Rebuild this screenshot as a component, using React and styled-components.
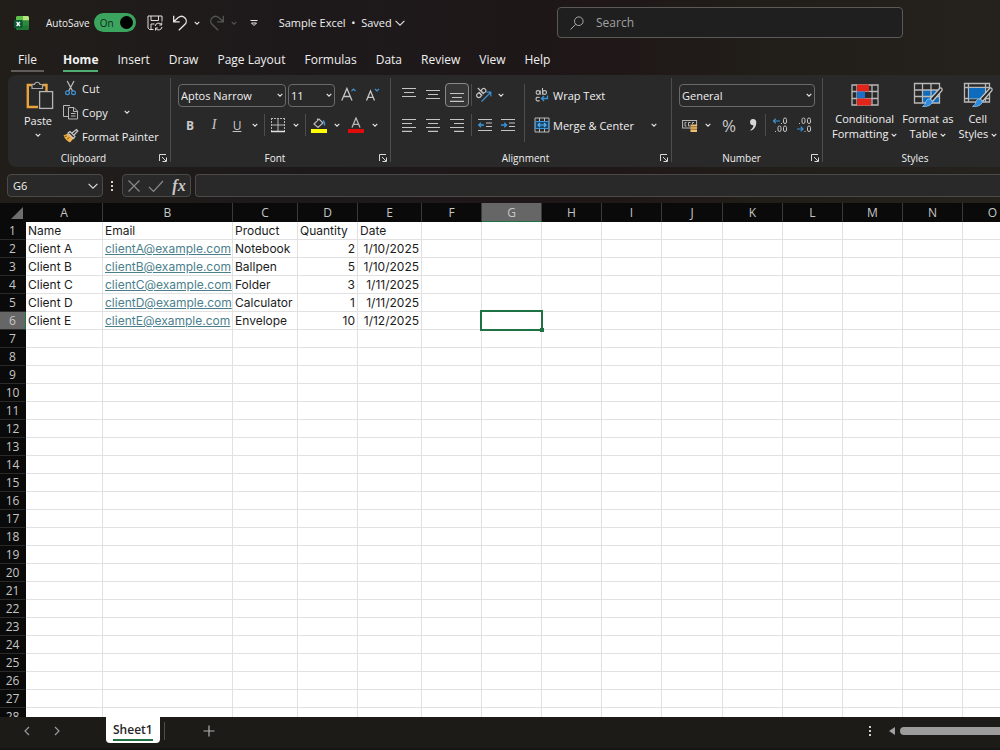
import React from "react";
import styled, { createGlobalStyle, css } from "styled-components";

const columns = [
  { name: "A", width: 77 },
  { name: "B", width: 130 },
  { name: "C", width: 65 },
  { name: "D", width: 60 },
  { name: "E", width: 64 },
  { name: "F", width: 60 },
  { name: "G", width: 60 },
  { name: "H", width: 60 },
  { name: "I", width: 60 },
  { name: "J", width: 61 },
  { name: "K", width: 60 },
  { name: "L", width: 60 },
  { name: "M", width: 60 },
  { name: "N", width: 60 },
  { name: "O", width: 60 },
];

const sheet = [
  ["Name", "Email", "Product", "Quantity", "Date"],
  ["Client A", "clientA@example.com", "Notebook", 2, "1/10/2025"],
  ["Client B", "clientB@example.com", "Ballpen", 5, "1/10/2025"],
  ["Client C", "clientC@example.com", "Folder", 3, "1/11/2025"],
  ["Client D", "clientD@example.com", "Calculator", 1, "1/11/2025"],
  ["Client E", "clientE@example.com", "Envelope", 10, "1/12/2025"],
];

const tabs = [
  "Insert",
  "Draw",
  "Page Layout",
  "Formulas",
  "Data",
  "Review",
  "View",
  "Help",
];

const ROW_COUNT = 28;
const tableWidth = columns.reduce((sum, c) => sum + c.width, 26);

// icons
const Chevron = ({ size = 6, color = "#e6e6e6" }) => (
  <svg width={size} height={size} viewBox="0 0 6 6" fill="none">
    <path d="M0.7 1.8 L3 4.2 L5.3 1.8" stroke={color} strokeWidth="1.1" />
  </svg>
);

const WideChevron = ({ color = "#e0e0e0" }) => (
  <svg width="10" height="10" viewBox="0 0 10 10" fill="none">
    <path d="M0.6 2.8 L5 7.2 L9.4 2.8" stroke={color} strokeWidth="1.1" />
  </svg>
);

const Logo = () => (
  <svg width="16" height="16" viewBox="0 0 16 16">
    <rect x="2" y="1" width="13" height="14" rx="1.5" fill="#1d7a34" />
    <path d="M3.5 1H9v4.6H2V2.500A1.500 1.500 0 0 1 3.500 1Z" fill="#5fbf4c" />
    <path d="M9 1h4.500A1.500 1.500 0 0 1 15 2.500V5.600H9Z" fill="#b7e67c" />
    <rect x="9" y="5.600" width="6" height="5" fill="#2c8a3a" />
    <rect x="0" y="5" width="8.500" height="8" rx="1.200" fill="#0c5a35" />
    <path d="M2.600 7 5.900 11M5.900 7 2.600 11" stroke="#fff" strokeWidth="1.300" />
  </svg>
);

const SaveIcon = () => (
  <svg width="16" height="16" viewBox="0 0 16 16" fill="none" stroke="#e0e0e0">
    <path d="M6.500 14.500H2.500L1 13V1H15V6.500M4 1V5.500H11.500V1M4 14.500V9H7.500" />
    <path d="M8.200 11A3.400 3.400 0 0 1 14.500 9.800M14.700 7.600V10H12.300M15 12A3.400 3.400 0 0 1 8.700 13.300M8.500 15.500V13H10.900" />
  </svg>
);

const UndoIcon = ({ color = "#e6e6e6" }) => (
  <svg width="16" height="16" viewBox="0 0 16 16" fill="none" stroke={color} strokeWidth="1.300">
    <path d="M1.700 0.800V6.800H7.700M1.900 6.600 6.300 2.600A5 5 0 0 1 12.800 2.700 4.700 4.700 0 0 1 13 9.300L6.800 15.300" />
  </svg>
);

const RedoIcon = () => (
  <svg width="16" height="16" viewBox="0 0 16 16" fill="none" stroke="#555" strokeWidth="1.300">
    <path d="M14.300 0.800V6.800H8.300M14.100 6.600 9.700 2.600A5 5 0 0 0 3.200 2.700 4.700 4.700 0 0 0 3 9.300L9.200 15.300" />
  </svg>
);

const CustomizeIcon = () => (
  <svg width="8" height="8" viewBox="0 0 8 8" fill="none" stroke="#e6e6e6">
    <path d="M0.500 1.500H7.500M1.500 4 4 6.500 6.500 4Z" />
  </svg>
);

const SearchIcon = () => (
  <svg width="14" height="14" viewBox="0 0 14 14" fill="none" stroke="#a8a8a8">
    <circle cx="8.800" cy="5.200" r="4.300" />
    <path d="M5.700 8.300 0.500 13.500" />
  </svg>
);

const PasteIcon = () => (
  <svg width="32" height="30" viewBox="-4 0 32 30" fill="none">
    <path d="M8 5H1.800V27H12M17 5H20.500V11" stroke="#e8a33d" strokeWidth="2.400" />
    <path d="M6 8.500V4.500H8.500A2.800 2.800 0 0 1 14 4.500H16.500V8.500Z" fill="#292929" stroke="#a8a8a8" strokeWidth="1.200" />
    <rect x="13.600" y="11.600" width="13" height="16.800" fill="#292929" stroke="#b5b5b5" strokeWidth="1.300" />
  </svg>
);

const CutIcon = () => (
  <svg width="16" height="16" viewBox="0 0 16 16" fill="none">
    <path d="M4.200 1 9.500 11M11 1 5.700 11" stroke="#c0c0c0" strokeWidth="1.200" />
    <circle cx="4.500" cy="12.700" r="1.900" stroke="#3b93d6" strokeWidth="1.200" />
    <circle cx="10.500" cy="12.700" r="1.900" stroke="#3b93d6" strokeWidth="1.200" />
  </svg>
);

const CopyIcon = () => (
  <svg width="16" height="16" viewBox="0 0 16 16" fill="none" stroke="#b8b8b8">
    <path d="M5 12.500H0.500V1.500H7" />
    <path d="M5.500 3.500H11L14.500 7V15H5.500ZM10.500 3.500V7.500H14.500M8 9.500H12.500M8 12H12.500" />
  </svg>
);

const PainterIcon = () => (
  <svg width="16" height="16" viewBox="0 0 16 16" fill="none">
    <path d="M0.500 7.500 5 5.500 10.500 10.500 7 14.500Q2.500 12.500 0.500 7.500Z" fill="#f0b34c" />
    <path d="M4 11 6.500 9.500M1.500 8.500 4 8" stroke="#7d5617" />
    <path d="M5 5 7 3.500 12 8.500 10.500 10.500ZM9 5 13.500 1.500 14.800 3 11 7" stroke="#c8c8c8" strokeWidth="1.200" fill="#292929" />
  </svg>
);

const LauncherIcon = () => (
  <svg width="8" height="8" viewBox="0 0 8 8" fill="none" stroke="#d8d8d8">
    <path d="M0.500 7V0.500H7M3 3 7 7M7.500 3.500V7.500H3.500" />
  </svg>
);

const GrowIcon = () => (
  <svg width="16" height="16" viewBox="0 0 16 16" fill="none">
    <path d="M0.800 13.500 5.900 1.500 11 13.500M2.600 9.500H9.200" stroke="#c4c4c4" strokeWidth="1.300" />
    <path d="M10.500 4 12.500 2 14.500 4" stroke="#3b93d6" strokeWidth="1.200" />
  </svg>
);

const ShrinkIcon = () => (
  <svg width="16" height="16" viewBox="0 0 16 16" fill="none">
    <path d="M1.500 13.500 5.500 4 9.500 13.500M3 10.300H8" stroke="#c4c4c4" strokeWidth="1.300" />
    <path d="M10 2 12 4 14 2" stroke="#3b93d6" strokeWidth="1.200" />
  </svg>
);

const BordersIcon = () => (
  <svg width="16" height="16" viewBox="0 0 16 16" fill="none" stroke="#b8b8b8">
    <path d="M1.500 1V14M14.500 1V14M1 1.500H15" strokeDasharray="2 1" />
    <path d="M8 2V14M2 8H14" />
    <path d="M1 14.500H15" stroke="#e0e0e0" strokeWidth="1.500" />
  </svg>
);

const FillIcon = () => (
  <svg width="16" height="16" viewBox="0 0 16 16" fill="none">
    <path d="M6.500 1.500V4M3 7 8 2 12 6 7 10.500Z" stroke="#b8b8b8" strokeWidth="1.200" />
    <path d="M12 3.500Q14 5 13.500 8.500" stroke="#3b93d6" strokeWidth="1.400" />
    <rect x="0" y="12" width="16" height="4" fill="#ffff00" />
  </svg>
);

const FontColorIcon = () => (
  <svg width="16" height="16" viewBox="0 0 16 16" fill="none">
    <path d="M4 10.500 8 1 12 10.500M5.400 7.300H10.600" stroke="#b8b8b8" strokeWidth="1.300" />
    <rect x="0" y="12" width="16" height="4" fill="#e00b0b" />
  </svg>
);

const LinesIcon = ({ lines }) => (
  <svg width="14" height="14" viewBox="0 0 14 14" stroke="#c4c4c4" strokeWidth="1.200">
    {lines.map(([x1, x2, y]) => (
      <path key={y} d={`M${x1} ${y}H${x2}`} />
    ))}
  </svg>
);

const OrientationIcon = () => (
  <svg width="16" height="16" viewBox="0 0 16 16" fill="none">
    <g transform="rotate(-45 5 7)" stroke="#c4c4c4" strokeWidth="1.200">
      <circle cx="2.500" cy="6.500" r="2.200" />
      <path d="M4.800 4V9M7 0.500V9" />
      <circle cx="9.300" cy="6.500" r="2.200" />
    </g>
    <path d="M5.500 14.500 14.500 5.500M10.500 5.200H14.800V9.500" stroke="#3b93d6" strokeWidth="1.200" />
  </svg>
);

const IndentIcon = ({ right }) => (
  <svg width="14" height="14" viewBox="0 0 14 14" fill="none">
    <path d="M0 1.500H14M8 5H14M8 8.500H14M0 12.500H14" stroke="#c4c4c4" strokeWidth="1.200" />
    <path
      d={right ? "M0 7H5.500M3.300 4.700 5.600 7 3.300 9.300" : "M6 7H0.700M3 4.700 0.700 7 3 9.300"}
      stroke="#3b93d6"
      strokeWidth="1.300"
    />
  </svg>
);

const WrapIcon = () => (
  <svg width="16" height="16" viewBox="0 0 16 16" fill="none">
    <g stroke="#c4c4c4" strokeWidth="1.100">
      <circle cx="4" cy="5.500" r="1.900" />
      <path d="M6.200 3.500V7.700M8.500 1V7.700M5.700 10.500Q2 9.500 2 12 2 14.500 5.700 13.700" />
      <circle cx="10.600" cy="5.500" r="1.900" />
    </g>
    <path d="M13.500 8.500V11.500H7.500M10 9 7.500 11.500 10 14" stroke="#3b93d6" strokeWidth="1.300" />
  </svg>
);

const MergeIcon = () => (
  <svg width="16" height="16" viewBox="0 0 16 16" fill="none">
    <path d="M1 1H15V15H1ZM5.500 1V4M10.500 1V4M5.500 12V15M10.500 12V15" stroke="#b8b8b8" />
    <rect x="1.500" y="4.500" width="13" height="7" fill="#14486e" stroke="#3b93d6" />
    <path d="M4 8H12M6 6 4 8 6 10M10 6 12 8 10 10" stroke="#5fb2ee" strokeWidth="1.100" />
  </svg>
);

const AccountingIcon = () => (
  <svg width="16" height="16" viewBox="0 0 16 16" fill="none">
    <rect x="0.600" y="3.500" width="14" height="7.500" stroke="#b8b8b8" />
    <path d="M4.500 5.500H3V9H4.500M8.500 5.500H6.500V9H8M12 5.500H10.500V7" stroke="#b8b8b8" />
    <path d="M8.500 7.500H15V15H8.500Z" fill="#f0c070" />
    <path d="M8.500 9.800H15M8.500 12.200H15" stroke="#6b4b1c" strokeWidth="0.800" />
  </svg>
);

const CommaIcon = () => (
  <svg width="10" height="16" viewBox="0 0 10 16" fill="#d6d6d6">
    <path d="M5 2A3.100 3.100 0 0 1 8.300 5.500C8.300 9.500 6.500 12.300 2.800 13.800L2.300 12.900C4.300 11.700 5.300 10.300 5.400 8.300A3.100 3.100 0 1 1 5 2Z" />
  </svg>
);

const DecimalIcon = ({ decrease }) => (
  <svg width="16" height="16" viewBox="0 0 16 16" fill="none">
    <g stroke="#c4c4c4">
      <rect x={decrease ? 6 : 11.500} y="1" width="3" height="5.500" rx="1.500" />
      {decrease && <rect x="11.500" y="1" width="3" height="5.500" rx="1.500" />}
      <rect x="11.500" y="9" width="3" height="5.500" rx="1.500" />
      {!decrease && <rect x="6" y="9" width="3" height="5.500" rx="1.500" />}
      <path d={decrease ? "M3 6.500H4M8.500 14.500H9.500" : "M3 14.500H4M9 6.500H10"} />
    </g>
    <path
      d={decrease ? "M1 12H7M4.700 9.700 7 12 4.700 14.300" : "M8 4H1.500M3.800 1.700 1.500 4 3.800 6.300"}
      stroke="#3b93d6"
      strokeWidth="1.200"
    />
  </svg>
);

const ConditionalIcon = () => (
  <svg width="28" height="24" viewBox="0 0 28 24" fill="none">
    <path d="M1 2H27V22H1ZM1 8.500H27M1 15.500H27M6 2V22M21 2V22" stroke="#b8b8b8" strokeWidth="1.300" />
    <rect x="6" y="1.500" width="12" height="7" fill="#e0251b" />
    <rect x="6" y="8.500" width="8" height="7" fill="#1c6fc4" />
    <rect x="14" y="9.200" width="6.300" height="5.600" fill="#292929" />
    <rect x="6" y="15.500" width="14" height="7" fill="#e0251b" />
  </svg>
);

const Brush = () => (
  <>
    <path d="M27 6 17 17 19.500 19.500 29 8.500Q29.500 5.500 27 6Z" fill="#292929" stroke="#c8c8c8" strokeWidth="1.200" />
    <path d="M15.500 17Q18.500 16.500 19.500 20 17.500 25 9.500 24.500 13 22.500 13 19.500 13.500 17.500 15.500 17Z" fill="#2e8bdc" stroke="#8cc4f2" strokeWidth="0.800" />
  </>
);

const FormatTableIcon = () => (
  <svg width="30" height="26" viewBox="0 0 30 26" fill="none">
    <rect x="10" y="8" width="17" height="13" fill="#0f6cbd" />
    <path d="M1.500 1.500H26.500V21H1.500ZM1.500 8H26.500M1.500 14.500H26.500M9.500 1.500V21M18 1.500V21" stroke="#b8b8b8" strokeWidth="1.300" />
    <Brush />
  </svg>
);

const CellStylesIcon = () => (
  <svg width="30" height="26" viewBox="0 0 30 26" fill="none">
    <path d="M1.500 1.500H26.500V20H1.500ZM1.500 5.500H26.500M1.500 16.500H26.500M5.500 1.500V20M22.500 1.500V20" stroke="#b8b8b8" strokeWidth="1.300" />
    <rect x="6" y="6" width="16" height="10.500" fill="#0f6cbd" />
    <Brush />
  </svg>
);

const DotsIcon = () => (
  <svg width="4" height="12" viewBox="0 0 4 12" fill="#d0d0d0">
    <rect x="1" y="1" width="2" height="2" />
    <rect x="1" y="5" width="2" height="2" />
    <rect x="1" y="9" width="2" height="2" />
  </svg>
);

const StrokeIcon = ({ d, width = 14, color = "#8a8a8a" }) => (
  <svg width={width} height="14" viewBox={`0 0 ${width} 14`} fill="none" stroke={color} strokeWidth="1.200">
    <path d={d} />
  </svg>
);

const lines = {
  top: [[0, 14, 0.5], [2, 12, 4.5], [0, 14, 8.5]],
  middle: [[0, 14, 2.5], [2, 12, 6.5], [0, 14, 10.5]],
  bottom: [[0, 14, 5.5], [2, 12, 9.5], [0, 14, 13.4]],
  left: [[0, 14, 1.5], [0, 10, 5.5], [0, 14, 9.5], [0, 10, 13.4]],
  center: [[0, 14, 1.5], [2, 12, 5.5], [0, 14, 9.5], [2, 12, 13.4]],
  right: [[0, 14, 1.5], [4, 14, 5.5], [0, 14, 9.5], [4, 14, 13.4]],
};

function Dropdown({ label, value, width }) {
  return (
    <SelectWrap $width={width}>
      <Select aria-label={label} defaultValue={value}>
        <option>{value}</option>
      </Select>
      <SelectArrow>
        <Chevron />
      </SelectArrow>
    </SelectWrap>
  );
}

function More({ label }) {
  return (
    <ToolButton aria-label={label} $width={14}>
      <Chevron />
    </ToolButton>
  );
}

function Group({ name, width, launcher = true, children }) {
  return (
    <RibbonGroup $width={width}>
      <GroupBody>{children}</GroupBody>
      <GroupFooter>
        <GroupName>{name}</GroupName>
        {launcher && (
          <Launcher aria-label={`${name} settings`}>
            <LauncherIcon />
          </Launcher>
        )}
      </GroupFooter>
    </RibbonGroup>
  );
}

function Cell({ row, col }) {
  const value = sheet[row] ? sheet[row][col] : undefined;
  if (row === 5 && columns[col].name === "G") {
    return (
      <Td>
        <Selection />
      </Td>
    );
  }
  if (row > 0 && col === 1 && value) {
    return (
      <Td>
        <MailLink href={`mailto:${value}`}>{value}</MailLink>
      </Td>
    );
  }
  return <Td $right={row > 0 && col > 2}>{value}</Td>;
}

function App() {
  return (
    <Page>
      <GlobalStyle />
      <TitleBar>
        <TitleLeft>
          <Logo />
          <AutoSave>
            AutoSave
            <Toggle role="switch" aria-checked="true" aria-label="AutoSave">
              On
              <Knob />
            </Toggle>
          </AutoSave>
          <QuickBar>
            <ToolButton aria-label="Save" $width={24}>
              <SaveIcon />
            </ToolButton>
            <QuickPair>
              <ToolButton aria-label="Undo" $width={20}>
                <UndoIcon />
              </ToolButton>
              <More label="Undo list" />
            </QuickPair>
            <QuickPair>
              <ToolButton aria-label="Redo" $width={20}>
                <RedoIcon />
              </ToolButton>
              <ToolButton aria-label="Redo list" $width={14}>
                <Chevron color="#555" />
              </ToolButton>
            </QuickPair>
            <ToolButton aria-label="Customize toolbar" $width={20}>
              <CustomizeIcon />
            </ToolButton>
          </QuickBar>
          <FileName>
            Sample Excel&nbsp; • &nbsp;Saved
            <WideChevron />
          </FileName>
        </TitleLeft>
        <SearchBox>
          <SearchIcon />
          <SearchInput aria-label="Search" placeholder="Search" />
        </SearchBox>
      </TitleBar>

      <Tabs>
        <FileTab>File</FileTab>
        <Tab $active>Home</Tab>
        {tabs.map((t) => (
          <Tab key={t}>{t}</Tab>
        ))}
      </Tabs>

      <Ribbon>
        <Group name="Clipboard" width={163}>
          <PasteButton>
            <PasteIcon />
            Paste
            <Chevron />
          </PasteButton>
          <Stack>
            <TextButton $height={24}>
              <CutIcon />
              Cut
            </TextButton>
            <ToolRow $height={24}>
              <TextButton $height={24}>
                <CopyIcon />
                Copy
              </TextButton>
              <Spacer />
              <More label="Copy options" />
              <Gap />
            </ToolRow>
            <TextButton $height={24}>
              <PainterIcon />
              Format Painter
            </TextButton>
          </Stack>
        </Group>

        <Group name="Font" width={220}>
          <Tools>
            <ToolRow>
              <Dropdown label="Font name" value="Aptos Narrow" width={108} />
              <Dropdown label="Font size" value="11" width={47} />
              <ToolButton aria-label="Grow font" $width={24}>
                <GrowIcon />
              </ToolButton>
              <ToolButton aria-label="Shrink font" $width={24}>
                <ShrinkIcon />
              </ToolButton>
            </ToolRow>
            <ToolRow>
              <ToolButton $width={24}>
                <b>B</b>
              </ToolButton>
              <ToolButton $width={24}>
                <SerifItalic>I</SerifItalic>
              </ToolButton>
              <ToolButton $width={22}>
                <u>U</u>
              </ToolButton>
              <More label="Underline options" />
              <Divider />
              <ToolButton aria-label="Borders" $width={22}>
                <BordersIcon />
              </ToolButton>
              <More label="Border options" />
              <Divider />
              <ToolButton aria-label="Fill color" $width={22}>
                <FillIcon />
              </ToolButton>
              <More label="Fill color options" />
              <ToolButton aria-label="Font color" $width={24}>
                <FontColorIcon />
              </ToolButton>
              <More label="Font color options" />
            </ToolRow>
          </Tools>
        </Group>

        <Group name="Alignment" width={281}>
          <Tools $indent={6}>
            <ToolRow>
              <ToolButton aria-label="Top align" $width={24}>
                <LinesIcon lines={lines.top} />
              </ToolButton>
              <ToolButton aria-label="Middle align" $width={24}>
                <LinesIcon lines={lines.middle} />
              </ToolButton>
              <ToolButton aria-label="Bottom align" $width={24} $pressed>
                <LinesIcon lines={lines.bottom} />
              </ToolButton>
              <Divider />
              <ToolButton aria-label="Orientation" $width={20}>
                <OrientationIcon />
              </ToolButton>
              <More label="Orientation options" />
            </ToolRow>
            <ToolRow>
              <ToolButton aria-label="Align left" $width={24}>
                <LinesIcon lines={lines.left} />
              </ToolButton>
              <ToolButton aria-label="Center" $width={24}>
                <LinesIcon lines={lines.center} />
              </ToolButton>
              <ToolButton aria-label="Align right" $width={24}>
                <LinesIcon lines={lines.right} />
              </ToolButton>
              <Divider />
              <ToolButton aria-label="Decrease indent" $width={22}>
                <IndentIcon />
              </ToolButton>
              <ToolButton aria-label="Increase indent" $width={24}>
                <IndentIcon right />
              </ToolButton>
            </ToolRow>
          </Tools>
          <TallDivider />
          <WideTools>
            <TextButton $height={24}>
              <WrapIcon />
              Wrap Text
            </TextButton>
            <ToolRow>
              <TextButton $height={24}>
                <MergeIcon />
                Merge &amp; Center
              </TextButton>
              <Spacer />
              <More label="Merge options" />
            </ToolRow>
          </WideTools>
        </Group>

        <Group name="Number" width={151}>
          <Tools>
            <ToolRow>
              <Dropdown label="Number format" value="General" width={136} />
            </ToolRow>
            <ToolRow>
              <ToolButton aria-label="Accounting format" $width={22}>
                <AccountingIcon />
              </ToolButton>
              <More label="Accounting options" />
              <PercentButton $width={28}>%</PercentButton>
              <ToolButton aria-label="Comma style" $width={20}>
                <CommaIcon />
              </ToolButton>
              <Divider />
              <ToolButton aria-label="Increase decimal" $width={24}>
                <DecimalIcon />
              </ToolButton>
              <ToolButton aria-label="Decrease decimal" $width={24}>
                <DecimalIcon decrease />
              </ToolButton>
            </ToolRow>
          </Tools>
        </Group>

        <Group name="Styles" width={184} launcher={false}>
          <StyleButtons>
            <StyleButton>
              <ConditionalIcon />
              <span>
                Conditional
                <br />
                Formatting <Chevron />
              </span>
            </StyleButton>
            <StyleButton>
              <FormatTableIcon />
              <span>
                Format as
                <br />
                Table <Chevron />
              </span>
            </StyleButton>
            <StyleButton>
              <CellStylesIcon />
              <span>
                Cell
                <br />
                Styles <Chevron />
              </span>
            </StyleButton>
          </StyleButtons>
        </Group>
      </Ribbon>

      <FormulaBar>
        <NameBox>
          <NameInput aria-label="Name box" defaultValue="G6" />
          <ToolButton aria-label="Name list" $width={14}>
            <WideChevron />
          </ToolButton>
        </NameBox>
        <DotsIcon />
        <FormulaButtons>
          <ToolButton aria-label="Cancel" $width={22}>
            <StrokeIcon d="M1.500 1.500 12.500 12.500M12.500 1.500 1.500 12.500" />
          </ToolButton>
          <ToolButton aria-label="Enter" $width={22}>
            <StrokeIcon width={16} d="M1 8 5.500 12.500 15 2" />
          </ToolButton>
          <FxButton aria-label="Insert function" $width={24}>
            fx
          </FxButton>
        </FormulaButtons>
        <FormulaInput aria-label="Formula" />
      </FormulaBar>

      <SheetArea>
        <Table>
          <colgroup>
            <Col $width={26} />
            {columns.map((c) => (
              <Col key={c.name} $width={c.width} />
            ))}
          </colgroup>
          <thead>
            <tr>
              <Corner aria-label="Select all">
                <svg width="24" height="18" viewBox="0 0 24 18">
                  <path d="M23 3V15H11Z" fill="#6e6e6e" />
                </svg>
              </Corner>
              {columns.map((c) => (
                <ColumnHead key={c.name} $active={c.name === "G"}>
                  {c.name}
                </ColumnHead>
              ))}
            </tr>
          </thead>
          <tbody>
            {Array.from({ length: ROW_COUNT }, (_, row) => (
              <tr key={row}>
                <RowHead $active={row === 5}>{row + 1}</RowHead>
                {columns.map((c, col) => (
                  <Cell key={c.name} row={row} col={col} />
                ))}
              </tr>
            ))}
          </tbody>
        </Table>
      </SheetArea>

      <BottomBar>
        <SheetNav>
          <ToolButton aria-label="Previous sheet" $width={30}>
            <StrokeIcon width={8} color="#9a9a9a" d="M6 3 2 7 6 11" />
          </ToolButton>
          <ToolButton aria-label="Next sheet" $width={30}>
            <StrokeIcon width={8} color="#9a9a9a" d="M2 3 6 7 2 11" />
          </ToolButton>
        </SheetNav>
        <SheetTab>
          <SheetName>Sheet1</SheetName>
        </SheetTab>
        <SheetDivider />
        <AddSheet aria-label="New sheet" $width={24}>
          <StrokeIcon color="#b0b0b0" d="M7 1.500V12.500M1.500 7H12.500" />
        </AddSheet>
        <Spacer />
        <DotsIcon />
        <ScrollBar>
          <svg width="8" height="10" viewBox="0 0 8 10">
            <path d="M7 1V9L1 5Z" fill="#a0a0a0" />
          </svg>
          <ScrollThumb />
        </ScrollBar>
      </BottomBar>
    </Page>
  );
}

const GlobalStyle = createGlobalStyle`
  * {
    box-sizing: border-box;
  }
  body {
    margin: 0;
    background: #111;
    font-family: "Open Sans", "Noto Sans", sans-serif;
    font-size: 11px;
    color: #f0f0f0;
  }
  button, input, select {
    margin: 0;
    padding: 0;
    border: none;
    background: none;
    font: inherit;
    color: inherit;
    outline: none;
  }
  svg {
    flex-shrink: 0;
  }
`;

const Page = styled.div`
  display: flex;
  flex-direction: column;
  height: 100vh;
  overflow: hidden;
  background: linear-gradient(90deg, #211e1a 0%, #1d191b 30%, #1f1718 60%, #211d18 75%, #25221d 100%);
`;

const TitleBar = styled.header`
  display: grid;
  grid-template-columns: 1fr minmax(160px, 346px) 97px;
  align-items: center;
  height: 45px;
  flex-shrink: 0;
`;

const TitleLeft = styled.div`
  display: flex;
  align-items: center;
  padding-left: 14px;
`;

const AutoSave = styled.div`
  display: flex;
  align-items: center;
  gap: 4px;
  margin-left: 16px;
  font-size: 10px;
`;

const Toggle = styled.button`
  display: flex;
  align-items: center;
  justify-content: space-between;
  width: 42px;
  height: 19px;
  padding: 0 3px 0 6px;
  border-radius: 10px;
  background: #3ba55f;
  color: #10281a;
`;

const Knob = styled.span`
  width: 13px;
  height: 13px;
  border-radius: 50%;
  background: #000;
`;

const QuickBar = styled.div`
  display: flex;
  align-items: center;
  gap: 3px;
  margin-left: 7px;
`;

const QuickPair = styled.div`
  display: flex;
`;

const FileName = styled.button`
  display: flex;
  align-items: center;
  gap: 3px;
  margin-left: 15px;
  white-space: nowrap;
`;

const SearchBox = styled.div`
  display: flex;
  align-items: center;
  gap: 12px;
  height: 31px;
  padding-left: 12px;
  border: 1px solid #5c5a58;
  border-radius: 4px;
  background: #1f1f1f;
`;

const SearchInput = styled.input`
  flex: 1;
  min-width: 0;
  font-size: 12px;
  &::placeholder {
    color: #a0a0a0;
    opacity: 1;
  }
`;

const Tabs = styled.nav`
  display: flex;
  align-items: flex-start;
  gap: 19px;
  height: 30px;
  padding: 5px 0 0 11px;
  flex-shrink: 0;
`;

const Tab = styled.button`
  height: 22px;
  line-height: 20px;
  font-size: 12px;
  font-weight: ${(props) => (props.$active ? 700 : 500)};
  border-bottom: 2px solid ${(props) => (props.$active ? "#4fae72" : "transparent")};
  white-space: nowrap;
`;

const FileTab = styled(Tab)`
  padding: 0 7px;
  border-color: #5f5d5b;
`;

const Ribbon = styled.section`
  display: flex;
  height: 92px;
  margin-left: 8px;
  padding: 1px 0;
  border-radius: 8px 0 0 8px;
  background: #292929;
  overflow: hidden;
  flex-shrink: 0;
`;

const RibbonGroup = styled.div`
  position: relative;
  display: flex;
  flex-direction: column;
  width: ${(props) => props.$width}px;
  flex-shrink: 0;
  &:not(:last-child)::after {
    content: "";
    position: absolute;
    top: 2px;
    right: 0;
    bottom: 4px;
    width: 1px;
    background: #4d4d4d;
  }
`;

const GroupBody = styled.div`
  display: flex;
  height: 74px;
`;

const GroupFooter = styled.div`
  display: flex;
  align-items: center;
  height: 15px;
  font-size: 10px;
`;

const GroupName = styled.div`
  flex: 1;
  text-align: center;
`;

const Launcher = styled.button`
  display: flex;
  width: 12px;
`;

const PasteButton = styled.button`
  display: flex;
  flex-direction: column;
  align-items: center;
  gap: 4px;
  width: 44px;
  margin: 4px 3px 0 8px;
  line-height: 14px;
`;

const Stack = styled.div`
  display: flex;
  flex-direction: column;
`;

const Tools = styled.div`
  display: flex;
  flex-direction: column;
  gap: 6px;
  padding: 7px 0 0 ${(props) => props.$indent || 7}px;
`;

const WideTools = styled(Tools)`
  flex: 1;
  padding-right: 11px;
`;

const ToolRow = styled.div`
  display: flex;
  align-items: center;
  height: ${(props) => props.$height || 24}px;
`;

const ToolButton = styled.button`
  display: flex;
  align-items: center;
  justify-content: center;
  width: ${(props) => props.$width}px;
  height: 24px;
  flex-shrink: 0;
  color: #c8c8c8;
  font-size: 12px;
  ${(props) =>
    props.$pressed &&
    css`
      border: 1px solid #8a8a8a;
      border-radius: 4px;
      background: #363636;
    `}
`;

const TextButton = styled.button`
  display: flex;
  align-items: center;
  gap: 3px;
  height: ${(props) => props.$height}px;
  white-space: nowrap;
`;

const SerifItalic = styled.i`
  font-family: "Liberation Serif", serif;
  font-size: 14px;
`;

const PercentButton = styled(ToolButton)`
  font-size: 17px;
`;

const Spacer = styled.div`
  flex: 1;
`;

const Gap = styled.div`
  width: 25px;
`;

const Divider = styled.div`
  width: 1px;
  height: 22px;
  margin: 0 2px;
  background: #4d4d4d;
`;

const TallDivider = styled.div`
  width: 1px;
  height: 58px;
  margin: 8px 2px 0 4px;
  background: #4d4d4d;
`;

const SelectWrap = styled.div`
  position: relative;
  width: ${(props) => props.$width}px;
  margin-right: 2px;
`;

const Select = styled.select`
  appearance: none;
  width: 100%;
  height: 23px;
  padding-left: 2px;
  border: 1px solid #6a6a6a;
  border-radius: 4px;
  background: #292929;
`;

const SelectArrow = styled.span`
  position: absolute;
  top: 0;
  right: 3px;
  bottom: 0;
  display: flex;
  align-items: center;
  pointer-events: none;
`;

const StyleButtons = styled.div`
  display: flex;
  gap: 5px;
  padding: 6px 0 0 9px;
`;

const StyleButton = styled.button`
  display: flex;
  flex-direction: column;
  align-items: center;
  gap: 3px;
  line-height: 15px;
  white-space: nowrap;
  & > svg {
    height: 26px;
  }
`;

const FormulaBar = styled.div`
  display: flex;
  align-items: center;
  height: 36px;
  padding: 1px 0 0 7px;
  gap: 4px;
  flex-shrink: 0;
`;

const barBox = css`
  height: 23px;
  border: 1px solid #4b4a48;
  border-radius: 4px;
  background: #292929;
`;

const NameBox = styled.div`
  ${barBox}
  display: flex;
  align-items: center;
  width: 96px;
  padding: 0 2px 0 5px;
  margin-right: 3px;
`;

const NameInput = styled.input`
  flex: 1;
  min-width: 0;
`;

const FormulaButtons = styled.div`
  ${barBox}
  display: flex;
  align-items: center;
  width: 69px;
  margin-left: 4px;
`;

const FxButton = styled(ToolButton)`
  font-family: "Liberation Serif", serif;
  font-style: italic;
  font-weight: bold;
  font-size: 16px;
`;

const FormulaInput = styled.input`
  ${barBox}
  flex: 1;
  min-width: 0;
  padding: 0 6px;
  border-right: none;
  border-radius: 4px 0 0 4px;
`;

const SheetArea = styled.main`
  flex: 1;
  min-height: 0;
  overflow: hidden;
  background: #fff;
`;

const Table = styled.table`
  width: ${tableWidth}px;
  table-layout: fixed;
  border-collapse: separate;
  border-spacing: 0;
  font-family: Inter, "Open Sans", sans-serif;
  font-size: 12px;
  line-height: 17px;
  color: #1c1c1c;
`;

const Col = styled.col`
  width: ${(props) => props.$width}px;
`;

const headCell = css`
  height: 18px;
  padding: 0;
  font-family: "Open Sans", sans-serif;
  font-size: 12px;
  font-weight: 400;
  text-align: center;
  color: #c6c6c6;
`;

const Corner = styled.td`
  ${headCell}
  background: #0a0a0a;
  svg {
    display: block;
  }
`;

const ColumnHead = styled.th`
  ${headCell}
  height: 19px;
  border-right: 1px solid #3a3a3a;
  border-bottom: 1px solid ${(props) => (props.$active ? "#1f7244" : "#0a0a0a")};
  background: ${(props) => (props.$active ? "#666" : "#0a0a0a")};
`;

const RowHead = styled.th`
  ${headCell}
  border-right: 1px solid ${(props) => (props.$active ? "#1f7244" : "#0a0a0a")};
  border-bottom: 1px solid #2a2a2a;
  background: ${(props) => (props.$active ? "#666" : "#0a0a0a")};
`;

const Td = styled.td`
  position: relative;
  height: 18px;
  padding: 0 2px;
  border-right: 1px solid #e1e1e1;
  border-bottom: 1px solid #e1e1e1;
  text-align: ${(props) => (props.$right ? "right" : "left")};
  white-space: nowrap;
`;

const MailLink = styled.a`
  color: #4c7f8c;
`;

// green frame around the active cell, with its fill handle
const Selection = styled.div`
  position: absolute;
  z-index: 1;
  inset: -2px;
  border: 2px solid #1f7244;
  &::after {
    content: "";
    position: absolute;
    right: -3px;
    bottom: -3px;
    width: 4px;
    height: 4px;
    background: #1f7244;
  }
`;

const BottomBar = styled.footer`
  display: flex;
  align-items: center;
  height: 33px;
  padding-bottom: 4px;
  border-bottom: 2px solid #141414;
  background: #1d1b17;
  flex-shrink: 0;
`;

const SheetNav = styled.div`
  display: flex;
  padding: 0 34px 0 12px;
`;

const SheetTab = styled.button`
  align-self: flex-start;
  height: 26px;
  padding: 0 7px;
  border-radius: 0 0 4px 4px;
  background: #fff;
  color: #262626;
  font-size: 12px;
  font-weight: 600;
`;

const SheetName = styled.span`
  display: block;
  height: 22px;
  line-height: 22px;
  border-bottom: 2px solid #1f7244;
`;

const SheetDivider = styled.div`
  width: 1px;
  height: 18px;
  margin-left: 4px;
  background: #4d4d4d;
`;

const AddSheet = styled(ToolButton)`
  margin-left: 32px;
`;

const ScrollBar = styled.div`
  display: flex;
  align-items: center;
  gap: 4px;
  width: 112px;
  margin-left: 16px;
`;

const ScrollThumb = styled.div`
  flex: 1;
  height: 8px;
  border-radius: 4px 0 0 4px;
  background: #9c9c9c;
`;

export default App;
